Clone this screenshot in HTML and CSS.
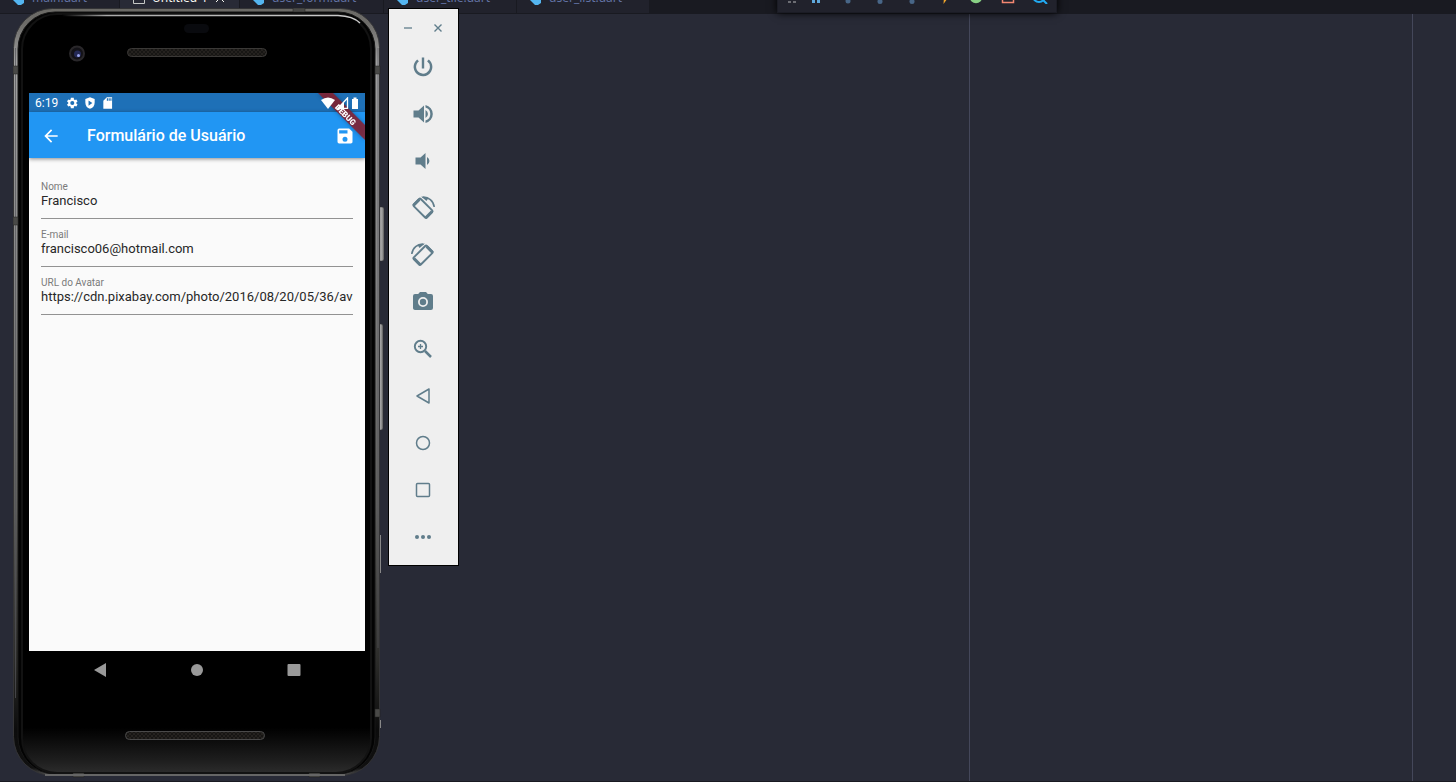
FILE: index.html
```html
<!DOCTYPE html>
<html lang="pt-BR">
<head>
<meta charset="utf-8">
<title>Formulário de Usuário</title>
<link rel="stylesheet" href="styles.css">
</head>
<body>
<div class="editor">
  <nav class="tabstrip" aria-label="Arquivos abertos">
    <button class="tab tab-main"><svg class="dart" viewBox="0 0 14 14"><path d="M2 3 6 1l6 3v8l-3 2H6L1 9z"/></svg>main.dart</button>
    <button class="tab tab-active"><svg class="file" viewBox="0 0 14 14"><path d="M1.500.5h11v12h-11z"/></svg>Untitled-1<span class="tab-close"><svg viewBox="0 0 12 12"><path d="m2 2 8 8M10 2l-8 8"/></svg></span></button>
    <button class="tab tab-form"><svg class="dart" viewBox="0 0 14 14"><path d="M2 3 6 1l6 3v8l-3 2H6L1 9z"/></svg>user_form.dart</button>
    <button class="tab tab-file"><svg class="dart" viewBox="0 0 14 14"><path d="M2 3 6 1l6 3v8l-3 2H6L1 9z"/></svg>user_tile.dart</button>
    <button class="tab tab-file"><svg class="dart" viewBox="0 0 14 14"><path d="M2 3 6 1l6 3v8l-3 2H6L1 9z"/></svg>user_list.dart</button>
  </nav>
  <main class="panes"><div class="pane"></div><div class="minimap"></div><div class="gutter"></div></main>
</div>

<div class="debugbar">
  <span class="grip"><svg viewBox="0 0 16 16" fill="#6c6d73"><path d="M4 1h3v2H4zm5 0h3v2H9zM4 5h3v2H4zm5 0h3v2H9zM4 9h3v2H4zm5 0h3v2H9zM4 13h3v2H4zm5 0h3v2H9z"/></svg></span>
  <button aria-label="Pausar"><svg viewBox="0 0 16 16" fill="#5fa8dc"><path d="M4 2h3v13H4zm5 0h3v13H9z"/></svg></button>
  <button aria-label="Avançar"><svg viewBox="0 0 16 16" fill="#486687"><circle cx="8" cy="13" r="2.500"/><path d="M3 6a5 5 0 0 1 10 0" fill="none" stroke="#486687"/></svg></button>
  <button aria-label="Entrar"><svg viewBox="0 0 16 16" fill="#486687"><circle cx="8" cy="13.500" r="2.500"/><path d="M7 1h2v7H7z"/></svg></button>
  <button aria-label="Sair"><svg viewBox="0 0 16 16" fill="#486687"><circle cx="8" cy="13.500" r="2.500"/><path d="M7 1h2v7H7z"/></svg></button>
  <button aria-label="Recarregar"><svg viewBox="0 0 16 16" fill="#f0a52b"><path d="M10 0 4 9h4l-.5 7L14 7H9z"/></svg></button>
  <button aria-label="Reiniciar"><svg viewBox="0 0 16 16"><circle cx="8" cy="9" r="4.500" fill="none" stroke="#89d185" stroke-width="3.500"/></svg></button>
  <button aria-label="Parar"><svg viewBox="0 0 16 16"><path d="M2.500 3.500h11v11h-11z" fill="none" stroke="#f48771" stroke-width="1.500"/></svg></button>
  <button aria-label="Inspecionar"><svg viewBox="0 0 16 16" fill="none" stroke="#22aaf2" stroke-width="2"><circle cx="7" cy="8" r="6"/><path d="m10 11 5 5"/></svg></button>
</div>

<section class="phone" aria-label="Emulador">
  <svg class="hardware" viewBox="13 8 371 770" aria-hidden="true">
    <defs>
      <linearGradient id="metal" x1="0" y1="0" x2="0" y2="1">
        <stop offset="0" stop-color="#6b6a66"/><stop offset=".02" stop-color="#6d6c69"/><stop offset=".07" stop-color="#a0a0a0"/><stop offset=".35" stop-color="#858585"/><stop offset=".65" stop-color="#5e5e5c"/><stop offset=".85" stop-color="#2c2c2a"/><stop offset=".94" stop-color="#0c0c0c"/><stop offset=".99" stop-color="#111"/><stop offset="1" stop-color="#555"/>
      </linearGradient>
      <linearGradient id="base" x1="0" y1="0" x2="0" y2="1">
        <stop offset="0" stop-color="#000"/><stop offset=".94" stop-color="#000"/><stop offset=".985" stop-color="#1f1f1f"/><stop offset="1" stop-color="#2c2c2c"/>
      </linearGradient>
      <linearGradient id="shine"><stop offset="0" stop-color="#000"/><stop offset=".15" stop-color="#aaa"/><stop offset="1" stop-color="#ccc"/></linearGradient>
      <linearGradient id="key"><stop offset="0" stop-color="#555"/><stop offset=".5" stop-color="#aaa"/><stop offset="1" stop-color="#777"/></linearGradient>
      <pattern id="mesh" width="4" height="4" patternUnits="userSpaceOnUse"><path fill="#171614" d="M0 0h4v4H0z"/><path d="m0 0 4 4M4 0 0 4" stroke="#25221f"/></pattern>
    </defs>
    <g fill="url(#key)" stroke="#333" stroke-width=".5"><rect x="378" y="207" width="6" height="54" rx="2"/><rect x="377" y="324" width="6" height="106" rx="2"/></g>
    <path d="M380.500 535v38M380.500 720v8" stroke="#888"/>
    <rect x="13.500" y="8.500" width="366" height="767" rx="39" fill="url(#metal)" stroke="#343436"/>
    <path d="M15.500 48v650M378 48v600" stroke="#55555a" opacity=".7"/>
    <rect x="18" y="12" width="357" height="762" rx="37" fill="#030303" stroke="#171717"/>
    <rect x="22" y="14" width="349" height="759" rx="35" fill="url(#base)" stroke="#121212" stroke-width="2"/>
    <path d="M62 15.500H338Q353 16 360 23" fill="none" stroke="url(#shine)" stroke-width="1.500"/>
    <path d="M13 66h5v8h-5zM375 66h5v8h-5zM13 217h5v8h-5zM375 709h5v8h-5zM293 8h12v4h-12zM73 773h11v4H73zM309 773h11v4h-11z" fill="#494947" stroke="#222" stroke-width=".5"/>
    <path d="M45 775h300" stroke="#666" stroke-width="2"/>
    <rect x="184" y="24" width="25" height="9" rx="4.500" fill="#090a0e"/>
    <circle cx="77" cy="53.500" r="7" fill="#131217" stroke="#29272a" stroke-width="2"/><circle cx="77.500" cy="54" r="3.500" fill="#242955"/><circle cx="78.500" cy="55.500" r="1.500" fill="#9ba6ed"/>
    <rect x="127.500" y="48.500" width="139" height="8" rx="4" fill="url(#mesh)" stroke="#3b3937"/>
    <rect x="125.500" y="731.500" width="139" height="8" rx="4" fill="url(#mesh)" stroke="#4a4a4a"/>
  </svg>

  <div class="screen">
    <div class="statusbar">
      <span class="clock">6:19</span>
      <svg viewBox="0 0 24 24"><path d="M19.400 13a7.500 7.500 0 0 0 0-2l2.100-1.600-2-3.500-2.500 1a7 7 0 0 0-1.700-1L15 3h-5l-.4 2.900a7 7 0 0 0-1.700 1l-2.400-1-2 3.500L5.600 11a7.500 7.500 0 0 0 0 2l-2.100 1.600 2 3.500 2.400-1a7 7 0 0 0 1.700 1L10 21h5l.3-2.900a7 7 0 0 0 1.700-1l2.500 1 2-3.500zM12.500 15.500a3.500 3.500 0 1 1 0-7 3.500 3.500 0 0 1 0 7z"/></svg>
      <svg viewBox="0 0 24 24"><path fill-rule="evenodd" d="M12 2 4 5v6c0 5.500 3.300 9.700 8 11 4.700-1.300 8-5.500 8-11V5zM9.500 7.500l6.500 4.500-6.500 4.500z"/></svg>
      <svg viewBox="0 0 24 24"><path fill-rule="evenodd" d="M19 2h-9L4 8v14h15V2zm-7 6h-2V4h2zm3 0h-2V4h2zm3 0h-2V4h2z"/></svg>
      <span class="spring"></span>
      <svg class="wifi" viewBox="0 0 14 12"><path d="M7 12 0 3Q7-2 14 3z"/></svg>
      <svg class="signal" viewBox="0 0 12 12"><path d="M1 11.300 10.500 1v10.300z" fill="none" stroke="#fff" stroke-width="1.300"/><path d="M1 11.500 7 5v6.500z"/></svg>
      <svg class="battery" viewBox="0 0 8 12"><path d="M1 2h1.500V.5h3V2H7v10H1z"/></svg>
    </div>
    <header class="appbar">
      <button class="back" aria-label="Voltar"><svg viewBox="0 0 24 24"><path d="M20 11H7.830l5.590-5.590L12 4l-8 8 8 8 1.410-1.410L7.830 13H20z"/></svg></button>
      <h1>Formulário de Usuário</h1>
      <button class="save" aria-label="Salvar"><svg viewBox="0 0 24 24"><path d="M17 3H5a2 2 0 0 0-2 2v14a2 2 0 0 0 2 2h14c1.100 0 2-.9 2-2V7zm-5 16a3 3 0 1 1 0-6 3 3 0 0 1 0 6zm3-10H5V5h10z"/></svg></button>
    </header>
    <svg class="ribbon" viewBox="0 0 50 50"><path d="M3 0h15l32 32v15z" fill="#8c1c29" fill-opacity=".82"/><text x="31" y="24" transform="rotate(45 30 21)" text-anchor="middle">DEBUG</text></svg>
    <form class="form">
      <div class="field"><label for="nome">Nome</label><input id="nome" value="Francisco"></div>
      <div class="field"><label for="email">E-mail</label><input id="email" value="francisco06@hotmail.com"></div>
      <div class="field"><label for="avatar">URL do Avatar</label><input id="avatar" value="https://cdn.pixabay.com/photo/2016/08/20/05/36/avatar-1606916_960_720.png"></div>
    </form>
  </div>
  <nav class="softkeys">
    <button aria-label="Voltar"><svg viewBox="0 0 14 14"><path d="M13 0v14L1 7z"/></svg></button>
    <button aria-label="Início"><svg viewBox="0 0 14 14"><circle cx="7" cy="7" r="6"/></svg></button>
    <button aria-label="Recentes"><svg viewBox="0 0 14 14"><rect x=".5" y="1" width="13" height="12" rx="1"/></svg></button>
  </nav>
</section>

<aside class="emubar">
  <div class="winkeys">
    <button aria-label="Minimizar"><svg viewBox="0 0 10 10"><path d="M1 5h8" opacity=".65" stroke-width="2"/></svg></button>
    <button aria-label="Fechar"><svg viewBox="0 0 10 10"><path d="m1.500 1.500 7 7m0-7-7 7" stroke-width="1.400"/></svg></button>
  </div>
  <button aria-label="Ligar"><svg viewBox="0 0 24 24"><path d="M13.200 2.500h-2.400v11h2.400zm4.600 2-1.700 1.700A6.900 6.900 0 0 1 18.900 12 6.900 6.900 0 1 1 7.900 6.200L6.200 4.500A9.400 9.400 0 1 0 21.400 12c0-3-1.400-5.700-3.600-7.500z"/></svg></button>
  <button aria-label="Aumentar volume"><svg viewBox="0 0 24 24"><path d="M2.500 8.500v7h5L13 20.500v-17L7.500 8.500zM14.500 8v8a4.500 4.500 0 0 0 0-8zm0-5v2.500a6.800 6.800 0 0 1 0 13V21a9.200 9.200 0 0 0 0-18z"/></svg></button>
  <button aria-label="Diminuir volume"><svg viewBox="0 0 24 24"><path d="M4.500 8.500v7h5l5 4.500V4l-5 4.500zM16 8v8a4.500 4.500 0 0 0 0-8z"/></svg></button>
  <button aria-label="Girar à esquerda"><svg viewBox="0 0 24 24"><g fill="none" stroke="#607d8b"><rect x="7" y="3" width="10" height="18.500" rx="1.200" stroke-width="1.900" transform="rotate(-45 12 12.300)"/><path d="m2.400 9.500 6-6M14.500 22l6.500-6.500" stroke-width="3"/><path d="M11.500 1.200c6-.5 11 3.500 11.700 9.800" stroke-width="1.600"/></g><path d="m10 .5 7.500 1.500-2 3z"/></svg></button>
  <button aria-label="Girar à direita"><svg viewBox="0 0 24 24"><g fill="none" stroke="#607d8b"><rect x="7" y="3" width="10" height="18.500" rx="1.200" stroke-width="1.900" transform="rotate(45 12 12.300)"/><path d="m21.600 9.500-6-6M9.500 22 3 15.500" stroke-width="3"/><path d="M12.500 1.200C6.500.7 1.500 4.700.8 11" stroke-width="1.600"/></g><path d="M14 .5 6.500 2l2 3z"/></svg></button>
  <button aria-label="Capturar tela"><svg viewBox="0 0 24 24"><path fill-rule="evenodd" d="m9 2-1.800 2H4a2 2 0 0 0-2 2v12c0 1.100.9 2 2 2h16a2 2 0 0 0 2-2V6a2 2 0 0 0-2-2h-3.200L15 2zm3 15a5 5 0 1 1 0-10 5 5 0 0 1 0 10z"/><circle cx="12" cy="12" r="3.200"/></svg></button>
  <button aria-label="Zoom"><svg viewBox="0 0 24 24" fill="none" stroke="#607d8b"><circle cx="9.500" cy="9.500" r="5.700" stroke-width="1.900"/><path d="M9.500 7v5M7 9.500h5" stroke-width="1.300"/><path d="m14 14 6 6" stroke-width="2.500"/></svg></button>
  <button aria-label="Voltar"><svg viewBox="0 0 24 24"><path d="M18 5v14L6 12z" fill="none" stroke="#607d8b" stroke-width="1.500" stroke-linejoin="round"/></svg></button>
  <button aria-label="Início"><svg viewBox="0 0 24 24"><circle cx="12" cy="12" r="6.500" fill="none" stroke="#607d8b" stroke-width="1.500"/></svg></button>
  <button aria-label="Visão geral"><svg viewBox="0 0 24 24"><rect x="5.500" y="5.500" width="13" height="13" rx="1" fill="none" stroke="#607d8b" stroke-width="1.500"/></svg></button>
  <button aria-label="Mais"><svg viewBox="0 0 24 24"><circle cx="6" cy="12" r="2"/><circle cx="12" cy="12" r="2"/><circle cx="18" cy="12" r="2"/></svg></button>
</aside>
</body>
</html>
```
FILE: styles.css
```css
* { box-sizing: border-box; }
body { margin: 0; background: #282a36; overflow: hidden; font-family: "Noto Sans", sans-serif; }
button { border: 0; padding: 0; margin: 0; background: none; font: inherit; color: inherit; }
svg { display: block; flex: none; }

.editor { height: 100vh; display: flex; flex-direction: column; border-bottom: 1px solid #191a21; }
.tabstrip { height: 14px; flex: none; display: flex; align-items: flex-end; overflow: hidden; background: #191a21; border-bottom: 1px solid #191a21; }
.tab { height: 30px; flex: none; display: flex; align-items: center; gap: 6px; padding-left: 12px; background: #21222c; color: #6272a4; border-right: 1px solid #191a21; font-size: 12px; line-height: 16px; white-space: nowrap; }
.tab svg { width: 14px; height: 14px; }
.dart { fill: #54b5f0; }
.file { fill: none; stroke: #c5c8c6; }
.tab-main, .tab-active { width: 120px; }
.tab-active { background: #282a36; color: #f8f8f2; }
.tab-form { width: 144px; }
.tab-file { width: 133px; }
.tab-close svg { width: 12px; height: 12px; fill: none; stroke: #f8f8f2; }
.panes { flex: 1; display: flex; }
.pane { flex: 1; }
.minimap { width: 444px; border-left: 1px solid #44475a; border-right: 1px solid #44475a; }
.gutter { width: 43px; }

.debugbar { position: absolute; top: -22px; left: 777px; height: 35px; display: flex; align-items: center; background: #21222c; border: 1px solid #1b1c25; box-shadow: 0 0 8px #000; }
.debugbar button { width: 32px; display: grid; place-items: center; }
.grip { width: 22px; display: grid; justify-items: end; }
.debugbar svg { width: 16px; height: 16px; }

.phone { position: absolute; left: 13px; top: 8px; width: 371px; height: 770px; padding: 85px 19px 0 16px; font-family: Roboto, sans-serif; }
.hardware { position: absolute; inset: 0; width: 100%; height: 100%; }
.screen { position: relative; height: 558px; background: #fafafa; overflow: hidden; display: flex; flex-direction: column; }
.statusbar { height: 19px; flex: none; display: flex; align-items: center; gap: 4px; padding: 0 6px; background: #1e70b7; color: #fff; font-size: 12px; line-height: 14px; }
.statusbar svg { width: 14px; height: 14px; fill: #fff; position: relative; z-index: 2; }
.clock { width: 26px; padding-top: 1px; }
.spring { flex: 1; }
.statusbar .wifi { height: 12px; }
.statusbar .signal { width: 12px; height: 12px; }
.statusbar .battery { width: 8px; height: 12px; }
.statusbar .wifi, .statusbar .signal { margin-right: -2px; }
.appbar { height: 46px; flex: none; display: flex; align-items: center; padding: 1px 10px 0 12px; background: #2196f3; color: #fff; box-shadow: 0 1px 4px rgba(0, 0, 0, .45); }
.appbar h1 { margin: 0; padding-left: 26px; flex: 1; font-size: 16px; line-height: 20px; font-weight: 500; white-space: nowrap; }
.appbar svg { width: 20px; height: 20px; fill: #fff; }
.ribbon { position: absolute; right: 0; top: 0; width: 50px; height: 50px; filter: drop-shadow(0 0 2px rgba(0, 0, 0, .4)); z-index: 1; }
.ribbon text { fill: #fff; font-family: Roboto, sans-serif; font-weight: 900; font-size: 8px; }
.form { padding: 13px 12px; }
.field { height: 48px; padding-top: 10px; display: flex; flex-direction: column; border-bottom: 1px solid #929292; }
.field label { color: #7a7a7a; font-size: 10px; line-height: 11px; }
.field input { width: 100%; height: 18px; padding: 0; border: 0; outline: 0; background: none; color: #272727; font: 13px/18px Roboto, sans-serif; }
.softkeys { position: relative; height: 38px; padding: 0 22px; display: flex; justify-content: space-between; align-items: center; }
.softkeys button { flex: 1; display: grid; place-items: center; }
.softkeys svg { width: 14px; height: 14px; fill: #999; }

.emubar { position: absolute; left: 388px; top: 8px; width: 71px; background: #efefef; border: 1px solid #000; padding: 0 2px 5px 0; display: flex; flex-direction: column; }
.emubar > button { height: 47px; display: grid; place-items: center; }
.emubar > button svg { width: 24px; height: 24px; }
.emubar svg { fill: #607d8b; }
.winkeys { height: 34px; padding-top: 4px; display: flex; justify-content: center; align-items: center; gap: 20px; }
.winkeys svg { width: 10px; height: 10px; stroke: #607d8b; fill: none; }
.emubar svg[fill="none"] { fill: none; }
```
